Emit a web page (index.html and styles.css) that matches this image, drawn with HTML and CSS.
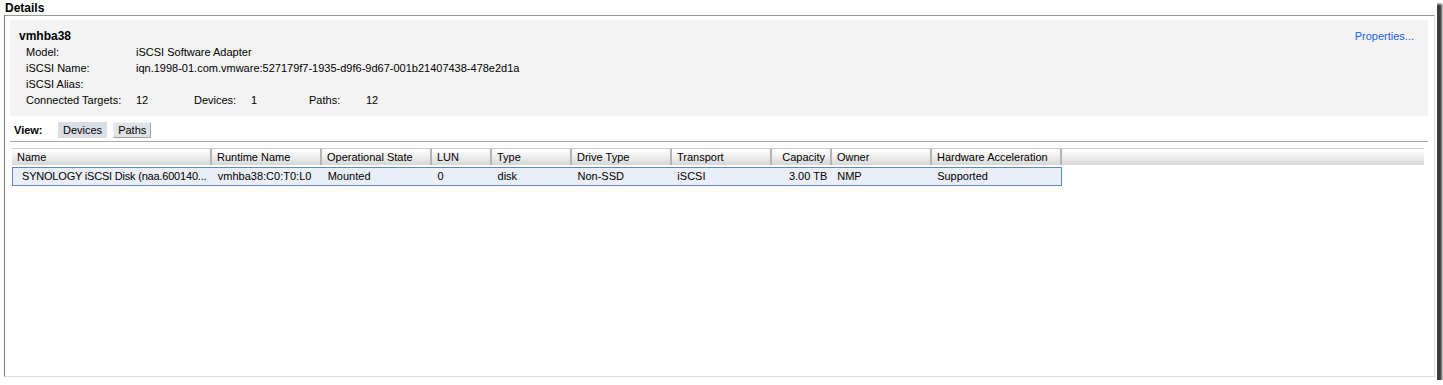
FILE: index.html
```html
<!DOCTYPE html>
<html lang="en">
<head>
    <meta charset="UTF-8">
    <title>Details</title>
    <link rel="stylesheet" href="styles.css">
</head>
<body>
    <div class="shot">
        <!-- Title -->
        <div class="pane-title">Details</div>

        <div class="frame">
            <!-- Adapter summary -->
            <section class="summary">
                <div class="summary-head">
                    <span class="adapter-name">vmhba38</span>
                    <a class="props-link" href="#">Properties...</a>
                </div>
                <div class="info-row">
                    <span class="info-label">Model:</span>
                    <span>iSCSI Software Adapter</span>
                </div>
                <div class="info-row">
                    <span class="info-label">iSCSI Name:</span>
                    <span>iqn.1998-01.com.vmware:527179f7-1935-d9f6-9d67-001b21407438-478e2d1a</span>
                </div>
                <div class="info-row">
                    <span class="info-label">iSCSI Alias:</span>
                    <span></span>
                </div>
                <div class="info-row">
                    <span class="info-label">Connected Targets:</span>
                    <span class="info-num">12</span>
                    <span class="info-sub">Devices:</span>
                    <span class="info-num">1</span>
                    <span class="info-sub">Paths:</span>
                    <span class="info-num">12</span>
                </div>
            </section>

            <!-- View switch -->
            <div class="view-bar">
                <span class="view-label">View:</span>
                <button class="view-btn active">Devices</button>
                <button class="view-btn">Paths</button>
            </div>

            <!-- Devices table -->
            <div class="table">
                <div class="row head">
                    <div class="cell c-name">Name</div>
                    <div class="cell c-rt">Runtime Name</div>
                    <div class="cell c-op">Operational State</div>
                    <div class="cell c-lun">LUN</div>
                    <div class="cell c-type">Type</div>
                    <div class="cell c-drive">Drive Type</div>
                    <div class="cell c-trans">Transport</div>
                    <div class="cell c-cap">Capacity</div>
                    <div class="cell c-owner">Owner</div>
                    <div class="cell c-hw">Hardware Acceleration</div>
                    <div class="cell c-fill"></div>
                </div>
                <div class="row item">
                    <div class="cell c-name">SYNOLOGY iSCSI Disk (naa.600140...</div>
                    <div class="cell c-rt">vmhba38:C0:T0:L0</div>
                    <div class="cell c-op">Mounted</div>
                    <div class="cell c-lun">0</div>
                    <div class="cell c-type">disk</div>
                    <div class="cell c-drive">Non-SSD</div>
                    <div class="cell c-trans">iSCSI</div>
                    <div class="cell c-cap">3.00 TB</div>
                    <div class="cell c-owner">NMP</div>
                    <div class="cell c-hw">Supported</div>
                </div>
            </div>
        </div>
    </div>
</body>
</html>
```

FILE: styles.css
```css
/* General */
body {
    margin: 0;
    background-color: #ffffff;
    font-family: "Liberation Sans", Arial, sans-serif;
    font-size: 11px;
    color: #000000;
}

/* Screenshot block with its drop shadow */
.shot {
    width: 1437px;
    height: 380px;
    background-color: #ffffff;
    box-shadow: 5px 4px 2px #3c3c3c;
}

.pane-title {
    height: 15px;
    padding-left: 5px;
    font-size: 12px;
    font-weight: bold;
    line-height: 17px;
}

.frame {
    margin-left: 4px;
    width: 1431px;
    height: 362px;
    box-sizing: border-box;
    border-top: 1px solid #9a9a9a;
    border-left: 1px solid #7a7a7a;
    border-right: 1px solid #dcdcdc;
    border-bottom: 1px solid #dcdcdc;
    padding: 4px 6px 0 5px;
}

/* Summary panel */
.summary {
    height: 96px;
    box-sizing: border-box;
    background-color: #f3f3f3;
    padding: 9px 13px 0 9px;
}

.summary-head {
    display: flex;
    justify-content: space-between;
    align-items: baseline;
    height: 15px;
}

.adapter-name {
    font-size: 12px;
    font-weight: bold;
}

.props-link {
    color: #2062e8;
    text-decoration: none;
    margin-right: 1px;
}

.info-row {
    display: flex;
    height: 16px;
    line-height: 16px;
    padding-left: 7px;
}

.info-label {
    width: 110px;
}

.info-num {
    width: 58px;
}

.info-sub {
    width: 57px;
}

/* View switch */
.view-bar {
    display: flex;
    align-items: center;
    height: 26px;
    padding: 3px 0 0 4px;
    border-bottom: 1px solid #a8a8a8;
    box-sizing: border-box;
}

.view-label {
    font-weight: bold;
    width: 44px;
}

.view-btn {
    font-family: inherit;
    font-size: 11px;
    height: 16px;
    margin: 0 6px 0 0;
    padding: 0 4px;
    border: 1px solid #dcdfe4;
    background-color: #d8dde6;
    color: #000000;
    line-height: 14px;
}

.view-btn + .view-btn {
    background-color: #dfe2e6;
    border-color: #f4f4f4 #a4a4a4 #a4a4a4 #f4f4f4;
}

/* Devices table */
.table {
    margin: 6px 4px 0 2px;
}

.row {
    display: flex;
}

.row.head {
    height: 17px;
    background: linear-gradient(#ffffff, #f0f0f0 45%, #d6d6d6);
    border-top: 1px solid #c8c8c8;
    box-sizing: border-box;
}

.row.head .cell {
    padding-left: 5px;
    line-height: 16px;
    border-right: 2px solid #b4b4b4;
}

.row.item {
    width: 1050px;
    height: 19px;
    margin-top: 2px;
    box-sizing: border-box;
    border: 1px solid #5b8bc2;
    background-color: #e9eef7;
}

.row.item .cell {
    padding-left: 6px;
    line-height: 17px;
}

.cell {
    box-sizing: border-box;
    white-space: nowrap;
    overflow: hidden;
}

.c-name { width: 200px; }
.c-rt { width: 110px; }
.c-op { width: 110px; }
.c-lun { width: 60px; }
.c-type { width: 80px; }
.c-drive { width: 100px; }
.c-trans { width: 100px; }
.c-owner { width: 100px; }
.c-hw { width: 130px; }

.c-cap {
    width: 60px;
    text-align: right;
}

.row.head .c-cap {
    padding-right: 5px;
}

.row.item .c-cap {
    padding-right: 4px;
}

.row.item .c-name {
    padding-left: 9px;
    width: 199px;
    letter-spacing: -0.2px;
}

.row.head .c-fill {
    flex: 1;
    border-right: none;
}
```
